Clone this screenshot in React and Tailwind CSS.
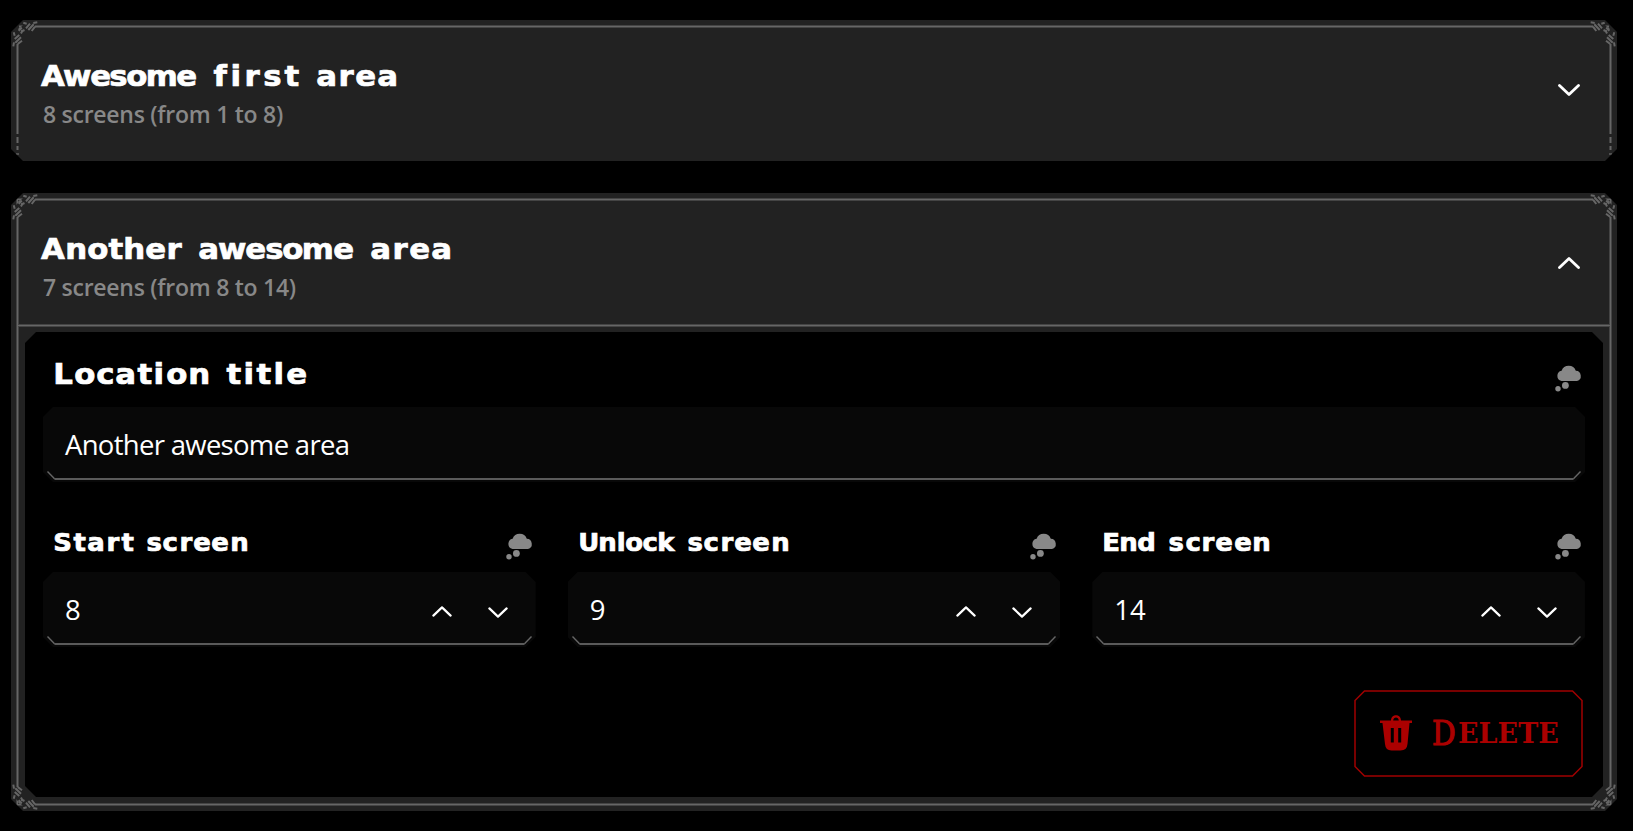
const PIXEL = "font-['DejaVu_Sans','Noto_Sans',sans-serif] font-bold leading-none text-white whitespace-nowrap [-webkit-text-stroke:0.7px_#fff]";
const BODY = "font-['Open_Sans','Noto_Sans',sans-serif] whitespace-nowrap";

function Words({ items, className }) {
  return (
    <h2 className={`${PIXEL} flex ${className}`}>
      {items.map(([word, width]) => (
        <span key={word} className="flex justify-between" style={{ width }}>
          {[...word].map((letter, i) => (
            <span key={i} className="inline-block scale-x-[1.08]">{letter}</span>
          ))}
        </span>
      ))}
    </h2>
  );
}

function Corner({ className }) {
  const half = "M12.3 2.7L15.7 3.7M15 8.3L19 3.7M17.3 10L22.7 4.3M20.7 11L24 6.7M22.3 3L26.3 2.3M8 11L9.7 7.5M10.3 11.5L13.5 10";
  return (
    <svg viewBox="0 0 28 28" className={`absolute size-7 ${className}`} fill="none" stroke="#666" strokeWidth="2">
      <path d="M7 8H28V4H13L4 13V28H8V7Z" fill="#222" stroke="none" />
      <path d="M24 6.5H28M6.5 24V28" stroke="#666" strokeWidth="2" />
      <path d={half} />
      <path d={half} transform="matrix(0 1 1 0 0 0)" />
    </svg>
  );
}

function Chevron({ up, className, stroke = 2.4 }) {
  return (
    <svg viewBox="0 0 22 12" className={className} fill="none" stroke="#fff" strokeWidth={stroke} strokeLinecap="round" strokeLinejoin="round">
      <path d={up ? "M1.5 10.5L11 1.5L20.5 10.5" : "M1.5 1.5L11 10.5L20.5 1.5"} />
    </svg>
  );
}

function Thought() {
  return (
    <svg viewBox="0 0 28 28" className="-mt-px h-7 w-7 shrink-0" fill="#888">
      <path d="M6.5 17A5.2 5.2 0 0 1 6.6 6.8A7.5 7.5 0 0 1 20.8 6.8A5.2 5.2 0 0 1 22 17Z" />
      <circle cx="10.4" cy="21.4" r="3.4" />
      <circle cx="3" cy="24.8" r="2.7" />
    </svg>
  );
}

function Field({ value, valueClass = "", children }) {
  return (
    <div className="flex h-[75px] flex-col bg-[#080808] [clip-path:polygon(10px_0,calc(100%-10px)_0,100%_10px,100%_calc(100%-10px),calc(100%-10px)_100%,10px_100%,0_calc(100%-10px),0_10px)]">
      <div className="flex h-[63px] items-center justify-between pl-[22px] pr-[28px] pt-[13px]">
        <span className={`${BODY} text-[27.5px] leading-none text-white ${valueClass}`}>{value}</span>
        {children}
      </div>
      <div className="flex h-[10px] items-end px-1">
        <svg viewBox="0 0 8 9" className="h-[9px] w-2" fill="none" stroke="#666" strokeWidth="1.4"><path d="M0.5 0.5L8 8.2" /></svg>
        <div className="h-[2px] grow bg-[#5a5a5a]" />
        <svg viewBox="0 0 8 9" className="h-[9px] w-2" fill="none" stroke="#666" strokeWidth="1.4"><path d="M7.5 0.5L0 8.2" /></svg>
      </div>
    </div>
  );
}

function NumberField({ label, value }) {
  return (
    <div>
      <div className="flex h-[39px] items-start justify-between pl-[11px] pr-[2px]">
        <Words items={label} className="mt-[-2px] gap-[14px] text-[24px]" />
        <Thought />
      </div>
      <Field value={value}>
        <span className="mt-[3px] flex gap-9">
          <Chevron up className="h-[11px] w-5" />
          <Chevron className="mt-px h-[11px] w-5" />
        </span>
      </Field>
    </div>
  );
}

function Header({ title, subtitle, up }) {
  return (
    <div className="flex justify-between pl-[26px] pr-[31px] pt-[35px]">
      <div>
        <Words items={title} className="-ml-px gap-[18px] text-[28.5px]" />
        <p className={`${BODY} mt-[7px] text-[23px] font-semibold leading-[30px] tracking-[-0.27px] text-[#888]`}>{subtitle}</p>
      </div>
      <Chevron up={up} stroke={2.8} className="mt-[21px] h-3 w-[22px]" />
    </div>
  );
}

function SideRail() {
  return (
    <div className="flex w-[3px] flex-col gap-[3px] pt-6">
      <div className="h-[90px] border-x border-x-[#444] bg-[#666]" />
      <div className="h-[6px] border-x border-x-[#444] bg-[#666]" />
      <div className="h-[4px] border-x border-x-[#444] bg-[#666]" />
      <div className="h-[2px] bg-[#505050]" />
    </div>
  );
}

const CARD = "relative bg-[#222] [clip-path:polygon(12px_0,calc(100%-12px)_0,100%_12px,100%_calc(100%-12px),calc(100%-12px)_100%,12px_100%,0_calc(100%-12px),0_12px)]";

export default function App() {
  return (
    <main className="h-[831px] w-[1633px] overflow-hidden bg-black pl-[11px] pr-4 pt-5">
      <section className={`${CARD} flex h-[141px] px-[5px] pt-[5px]`}>
        <div className="-mt-[5px]"><SideRail /></div>
        <div className="grow">
          <div className="h-[3px] border-y border-y-[#444] bg-[#666]" />
          <div className="-mx-[2px]">
            <Header title={[["Awesome", 154], ["first", 85], ["area", 80]]} subtitle="8 screens (from 1 to 8)" />
          </div>
        </div>
        <div className="-mt-[5px]"><SideRail /></div>
        <Corner className="left-0 top-0" />
        <Corner className="right-0 top-0 -scale-x-100" />
      </section>

      <section className={`${CARD} mt-8 h-[618px] p-[6px]`}>
        <div className="h-full border border-[#666] shadow-[0_0_0_1px_#444,inset_0_0_0_1px_#444]">
          <div className="-mx-px h-[126px] pt-[1px]">
            <Header up title={[["Another", 139], ["awesome", 154], ["area", 80]]} subtitle="7 screens (from 8 to 14)" />
          </div>
          <div className="-mt-[2px] h-[3px] border-y border-y-[#444] bg-[#666]" />
          <div className="mx-[7px] mt-[5px] h-[465px] bg-black px-[18px] pt-[33px] [clip-path:polygon(11px_0,calc(100%-11px)_0,100%_11px,100%_calc(100%-11px),calc(100%-11px)_100%,11px_100%,0_calc(100%-11px),0_11px)]">
            <div className="flex h-[42px] items-start justify-between pl-[11px] pr-[2px]">
              <Words items={[["Location", 155], ["title", 79]]} className="mt-[-4px] gap-[18px] text-[28.5px]" />
              <Thought />
            </div>
            <Field value="Another awesome area" valueClass="tracking-[-0.7px]" />
            <div className="mt-[51px] grid grid-cols-3 gap-8">
              <NumberField label={[["Start", 79], ["screen", 101]]} value="8" />
              <NumberField label={[["Unlock", 95], ["screen", 101]]} value="9" />
              <NumberField label={[["End", 52], ["screen", 101]]} value="14" />
            </div>
            <div className="mt-[43px] flex justify-end pr-[2px]">
              <button className="relative flex h-[87px] w-[229px] items-center pl-[26px]">
                <svg viewBox="0 0 229 87" className="absolute inset-0 h-full w-full" fill="none" stroke="#a00000" strokeWidth="1.5">
                  <path d="M10.5 1H218.5L228 10.5V76.5L218.5 86H10.5L1 76.5V10.5Z" />
                </svg>
                <svg viewBox="0 0 32 36" className="-mt-px h-9 w-8" fill="#ab0000">
                  <path fillRule="evenodd" d="M0 5.5H11C11-1.6 21-1.6 21 5.5H32V8H29.5L27.5 29Q27 35.5 20.5 35.5H11.5Q5.5 35.5 5 29L2.5 8H0ZM13.2 5.5H18.8C18.6 1.4 13.4 1.4 13.2 5.5ZM10.8 13V27.5H13.8V13ZM18.2 13V27.5H21.2V13Z" />
                </svg>
                <span className="-mt-[2px] ml-[20px] flex items-baseline font-['DejaVu_Serif',serif] font-bold leading-none text-[#ab0000]">
                  <span className="w-[26px] text-[34px] font-normal"><span className="inline-block origin-left scale-x-[0.87] [-webkit-text-stroke:1.2px_#ab0000]">D</span></span>
                  <span className="relative -top-[2px] text-[27px]">ELETE</span>
                </span>
              </button>
            </div>
          </div>
        </div>
        <Corner className="left-0 top-0" />
        <Corner className="right-0 top-0 -scale-x-100" />
        <Corner className="bottom-0 left-0 -scale-y-100" />
        <Corner className="bottom-0 right-0 -scale-100" />
      </section>
    </main>
  );
}
